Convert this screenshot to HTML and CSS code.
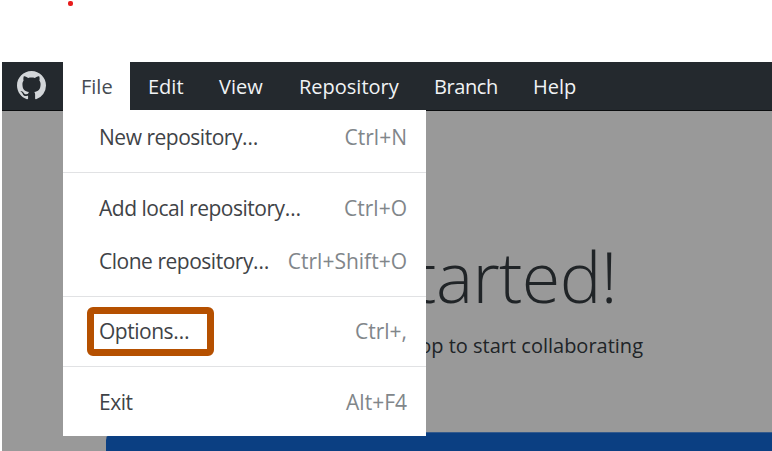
FILE: index.html
```html
<!DOCTYPE html>
<html lang="en">
<head>
<meta charset="utf-8">
<title>GitHub Desktop</title>
<link rel="stylesheet" href="styles.css">
</head>
<body>
<span class="marker"></span>
<div class="window">
  <header class="menubar">
    <svg class="logo" viewBox="0 0 16 16" aria-hidden="true"><path d="M8 0C3.58 0 0 3.58 0 8c0 3.54 2.29 6.53 5.47 7.59.4.07.65-.17.65-.38v-1.49c-2.01.37-2.73-.49-2.89-.94-.09-.23-.48-.94-.82-1.13-.28-.15-.68-.52-.01-.53.63-.01 1.08.58 1.23.82.72 1.21 1.87.87 2.49.66.07-.52.28-.87.51-1.07C4.4 11.3 3 10.3 3 7.300c0-.87.25-1.5.65-2.05-.08-.2-.3-1.3.1-2.4 0 0 .9-.1 2.4.95.6-.15 1.2-.22 1.85-.22s1.250.07 1.850.22c1.5-1.05 2.4-.95 2.4-.95.4 1.1.18 2.2.1 2.4.4.55.65 1.180.65 2.05 0 3-1.4 4-3.450 4.230.25.25.44.73.44 1.480v2.200c0 .21.15.46.55.38A8.010 8.010 0 0 0 16 8c0-4.42-3.58-8-8-8z"/></svg>
    <nav class="tabs">
      <div class="tab tab-open">File</div>
      <div class="tab tab-edit">Edit</div>
      <div class="tab tab-view">View</div>
      <div class="tab tab-repo">Repository</div>
      <div class="tab tab-branch">Branch</div>
      <div class="tab tab-help">Help</div>
    </nav>
  </header>
  <main class="content">
    <h1 class="title">tarted!</h1>
    <p class="subtitle">op to start collaborating</p>
    <div class="action"></div>
  </main>
  <div class="menu">
    <div class="item"><span class="label">New repository…</span><span class="key">Ctrl+N</span></div>
    <hr>
    <div class="item"><span class="label">Add local repository…</span><span class="key">Ctrl+O</span></div>
    <div class="item"><span class="label">Clone repository…</span><span class="key">Ctrl+Shift+O</span></div>
    <hr>
    <div class="item"><span class="label boxed">Options…</span><span class="key">Ctrl+,</span></div>
    <hr>
    <div class="item"><span class="label">Exit</span><span class="key">Alt+F4</span></div>
  </div>
</div>
</body>
</html>
```
FILE: styles.css
```css
* { box-sizing: border-box; }
body {
  margin: 0;
  height: 451px;
  padding: 62px 0 0 2px;
  overflow: hidden;
  background: #fff;
  font-family: "Open Sans", "Noto Sans", sans-serif;
  font-size: 21px;
}
.marker {
  position: absolute;
  left: 68px;
  top: 1px;
  width: 5px;
  height: 5px;
  border-radius: 2px;
  background: #e81c1c;
}
.window {
  position: relative;
  height: 389px;
  display: flex;
  flex-direction: column;
  background: #999;
}
.menubar {
  flex: none;
  display: flex;
  height: 49px;
  border-bottom: 1px solid #0b0d0f;
  background: #24292e;
}
.logo {
  width: 29px;
  height: 29px;
  margin: 9px 17px 0 15px;
  fill: #d3d6d9;
}
.tabs { display: flex; font-size: 20px; line-height: 49px; color: #f1f3f5; }
.tab { height: 48px; padding-left: 18px; white-space: nowrap; }
.tab-open { width: 67px; background: #fff; color: #454b52; }
.tab-edit { width: 71px; }
.tab-view { width: 80px; }
.tab-repo { width: 135px; }
.tab-branch { width: 99px; letter-spacing: -0.4px; }
.content { flex: 1; display: flex; flex-direction: column; min-height: 0; }
.title, .subtitle { margin: 0; text-align: right; white-space: nowrap; color: #202427; }
.title {
  padding: 117px 155px 0 0;
  font-size: 70px;
  font-weight: 300;
  line-height: 96px;
  letter-spacing: -0.6px;
}
.subtitle { padding: 7px 129px 0 0; font-size: 20px; line-height: 30px; }
.action {
  flex: 1;
  margin: 71px 0 0 104px;
  border-top: 1px solid #345a8c;
  border-radius: 8px 0 0;
  background: #0b3f82;
}
.menu {
  position: absolute;
  left: 61px;
  top: 48px;
  width: 363px;
  height: 326px;
  padding-top: 1px;
  background: #fff;
}
.item {
  display: flex;
  justify-content: space-between;
  height: 53px;
  padding: 0 19px 0 36px;
  line-height: 52px;
  color: #3f4347;
  white-space: nowrap;
}
.label { letter-spacing: -0.48px; }
.key { color: #81868a; }
hr { height: 1px; margin: 8px 0 8.7px; border: 0; background: #e1e2e4; }
.boxed { position: relative; }
.boxed::after {
  content: "";
  box-sizing: border-box;
  position: absolute;
  left: -12px;
  top: 2px;
  width: 127px;
  height: 49px;
  border: 7px solid #b55000;
  border-radius: 6px;
}
```
